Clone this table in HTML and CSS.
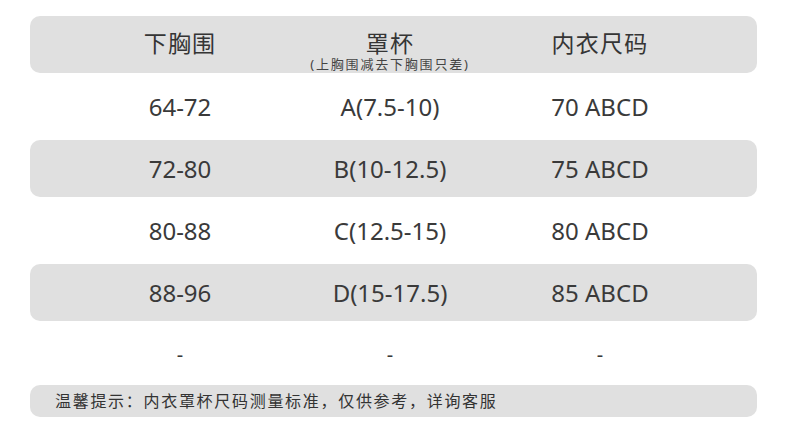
FILE: index.html
```html
<!DOCTYPE html>
<html lang="zh">
<head>
<meta charset="utf-8">
<title>尺码表</title>
<link rel="stylesheet" href="styles.css">
</head>
<body>
<div class="sheet">
  <div class="row head">
    <div class="cell"><span class="title">下胸围</span></div>
    <div class="cell"><span class="title">罩杯</span><span class="sub">(上胸围减去下胸围只差)</span></div>
    <div class="cell"><span class="title">内衣尺码</span></div>
  </div>
  <div class="row">
    <div class="cell">64-72</div>
    <div class="cell">A(7.5-10)</div>
    <div class="cell">70 ABCD</div>
  </div>
  <div class="row shade">
    <div class="cell">72-80</div>
    <div class="cell">B(10-12.5)</div>
    <div class="cell">75 ABCD</div>
  </div>
  <div class="row">
    <div class="cell">80-88</div>
    <div class="cell">C(12.5-15)</div>
    <div class="cell">80 ABCD</div>
  </div>
  <div class="row shade">
    <div class="cell">88-96</div>
    <div class="cell">D(15-17.5)</div>
    <div class="cell">85 ABCD</div>
  </div>
  <div class="row">
    <div class="cell dash">-</div>
    <div class="cell dash">-</div>
    <div class="cell dash">-</div>
  </div>
  <div class="note">温馨提示：内衣罩杯尺码测量标准，仅供参考，详询客服</div>
</div>
</body>
</html>
```
FILE: styles.css
```css
html, body {
  margin: 0;
  padding: 0;
  background: #ffffff;
}
body {
  font-family: "Noto Sans", "Noto Sans CJK SC", sans-serif;
  color: #3a3a3a;
}
.sheet {
  width: 727px;
  padding: 16px 0 0 30px;
  display: flex;
  flex-direction: column;
  gap: 5px;
}
.row {
  height: 57px;
  display: grid;
  grid-template-columns: 210px 210px 210px;
  padding-left: 45px;
  align-items: center;
  border-radius: 10px;
  font-size: 24px;
}
.shade, .head {
  background: #e0e0e0;
}
.cell {
  text-align: center;
  line-height: 30px;
}
.head {
  align-items: start;
  padding-top: 15px;
  height: 42px;
}
.head .cell {
  display: flex;
  flex-direction: column;
  align-items: center;
  line-height: 24px;
}
.title {
  font-size: 23px;
  line-height: 24px;
  height: 24px;
  letter-spacing: 1.2px;
  color: #353535;
}
.sub {
  margin-top: 3px;
  font-size: 13px;
  line-height: 13px;
  letter-spacing: 1.8px;
  color: #444;
}
.dash {
  font-size: 20px;
}
.note {
  margin-top: -3px;
  height: 32px;
  line-height: 32px;
  background: #e0e0e0;
  border-radius: 10px;
  padding-left: 25px;
  font-size: 16px;
  letter-spacing: 1.7px;
  color: #333;
}
```
